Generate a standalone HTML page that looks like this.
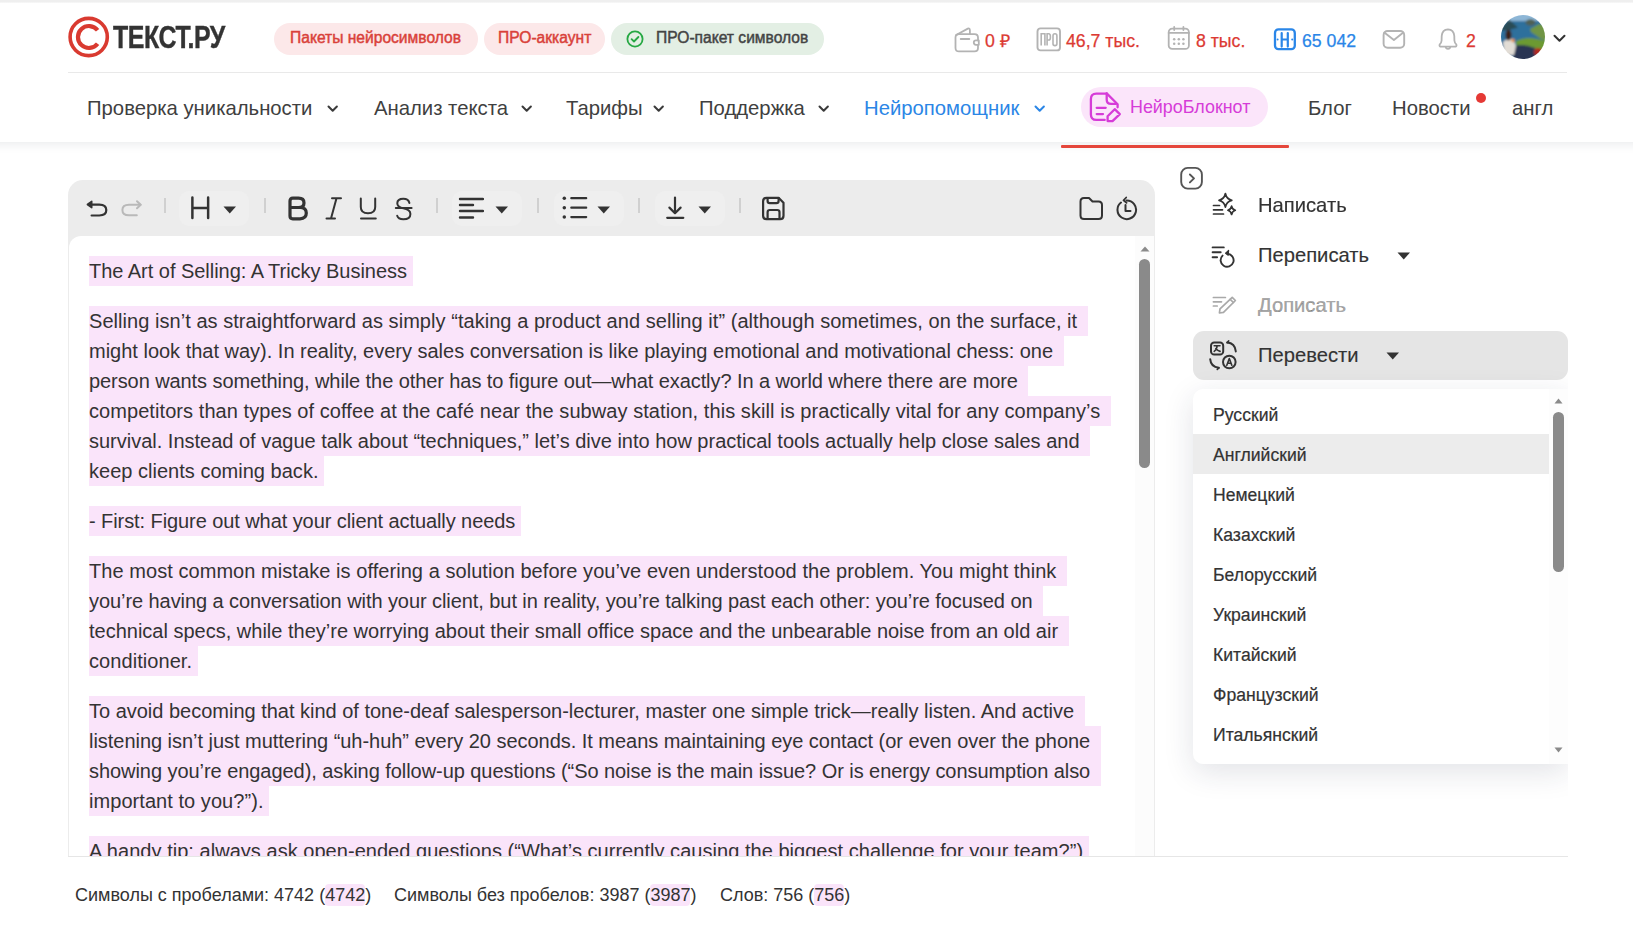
<!DOCTYPE html>
<html><head><meta charset="utf-8">
<style>
*{box-sizing:border-box;margin:0;padding:0}
html,body{width:1633px;height:928px;overflow:hidden;background:#fff;font-family:"Liberation Sans",sans-serif;color:#333}
.abs{position:absolute}
#topstrip{position:absolute;left:0;top:0;width:1633px;height:3px;background:linear-gradient(#efefef,#efefef 60%,#fafafa)}
#header{position:absolute;left:0;top:0;width:1633px;height:142px;background:#fff}
#hshadow{position:absolute;left:-60px;top:0;width:1753px;height:142px;background:#fff;box-shadow:0 3px 9px rgba(40,50,80,.09)}
.pill{position:absolute;top:23px;height:32px;border-radius:16px;font-size:15.6px;font-weight:400;-webkit-text-stroke:0.45px currentColor;line-height:30px;white-space:nowrap}
.pill.red{background:#fce8e9;color:#d9413a}
.pill.green{background:#e3efe4;color:#444}
.stat{position:absolute;top:28.5px;font-size:17.7px;line-height:24px;white-space:nowrap;-webkit-text-stroke:0.25px currentColor}
.nav{position:absolute;top:95px;font-size:20.3px;line-height:26px;color:#404040;white-space:nowrap}
.chev{position:absolute}
#editor{position:absolute;left:68px;top:180px;width:1087px;height:677px;background:#ececec;border-radius:15px 15px 0 0}
#content{position:absolute;left:1px;top:56px;width:1085px;height:620px;background:#fff;border-top-left-radius:12px;overflow:hidden}
.line{position:absolute;left:20px;height:30px;line-height:30px;font-size:20px;color:#333;background:#fae4fa;white-space:pre}
.foot{position:absolute;top:883px;font-size:18px;line-height:24px;color:#333;white-space:pre}
.foot .h{background:#fae4fa;display:inline-block;line-height:22px;border-radius:4px}
.menu{position:absolute;left:1258px;font-size:20.2px;line-height:26px;color:#333;white-space:nowrap;-webkit-text-stroke:0.15px #333}
.dd{position:absolute;left:1213px;font-size:17.6px;-webkit-text-stroke:0.2px #333;line-height:22px;color:#333;white-space:nowrap}
</style></head><body>
<div id="hshadow"></div>
<div id="header">
  <!-- logo -->
  <svg class="abs" style="left:66px;top:14px" width="46" height="46" viewBox="0 0 46 46">
    <circle cx="22.7" cy="23" r="18.6" fill="none" stroke="#d93a30" stroke-width="3.6"/>
    <path d="M31.6 16.2 A11 11 0 1 0 31.6 29.8" fill="none" stroke="#d93a30" stroke-width="4.2"/>
  </svg>
  <div class="abs" id="logotext" style="left:113px;top:19.5px;font-size:30.5px;font-weight:700;color:#333;line-height:34px;transform:scaleX(.817);-webkit-text-stroke:0.4px #333;transform-origin:0 0;letter-spacing:-0.5px">ТЕКСТ.РУ</div>
  <div class="pill red" style="left:274px;width:204px;padding-left:16px">Пакеты нейросимволов</div>
  <div class="pill red" style="left:484px;width:121px;padding-left:14px">ПРО-аккаунт</div>
  <div class="pill green" style="left:611px;width:213px;padding-left:45px">ПРО-пакет символов
    <svg class="abs" style="left:15px;top:7px" width="18" height="18" viewBox="0 0 18 18"><circle cx="9" cy="9" r="7.6" fill="none" stroke="#26a843" stroke-width="1.8"/><path d="M5.6 9.2 L8 11.5 L12.4 7" fill="none" stroke="#26a843" stroke-width="1.8" stroke-linecap="round" stroke-linejoin="round"/></svg>
  </div>
  <div class="abs" style="left:68px;top:72px;width:1499px;height:1px;background:#e9e9e9"></div>

  <!-- stats -->
  <svg class="abs" style="left:954px;top:27px" width="27" height="26" viewBox="0 0 27 26" fill="none" stroke="#b3b3b3" stroke-width="1.8" stroke-linejoin="round" stroke-linecap="round"><path d="M2.2 8 L13.8 1.6 Q15.9 0.9 15.9 3.4 V7.1"/><path d="M5 7.1 H20.5 Q24 7.1 24 10.6 V13.4 M24 17.8 V21 Q24 24.4 20.5 24.4 H5 Q1.5 24.4 1.5 21 V10.6 Q1.5 7.1 5 7.1"/><path d="M22 13.4 H24.8 V17.8 H22 Q19.8 17.8 19.8 15.6 Q19.8 13.4 22 13.4 Z"/><path d="M6.7 12 H15.3"/></svg>
  <div class="stat" style="left:985px;color:#dc3a33">0 ₽</div>
  <svg class="abs" style="left:1036px;top:27px" width="25" height="25" viewBox="0 0 25 25" fill="none" stroke="#b3b3b3" stroke-width="1.9"><rect x="1.5" y="1.4" width="22.5" height="22" rx="3"/><path d="M5.2 18.6 V6.8 H8.9 V18.6 M11.1 18.6 V6.8 H12.8 Q14.4 6.8 14.4 9.5 V10.4 Q14.4 13 12.8 13 H11.1" stroke-width="1.6"/><rect x="17" y="6.8" width="3.9" height="11.8" rx="1.9" stroke-width="1.6"/></svg>
  <div class="stat" style="left:1066px;color:#dc3a33">46,7 тыс.</div>
  <svg class="abs" style="left:1166px;top:26px" width="26" height="27" viewBox="0 0 26 27" fill="none" stroke="#b3b3b3" stroke-width="1.8" stroke-linecap="round"><rect x="2.7" y="2.7" width="20.2" height="20.2" rx="3.5"/><path d="M8.2 1 V4 M17.4 1 V4 M2.7 6.9 H22.9"/><g fill="#b3b3b3" stroke="none"><circle cx="8.2" cy="13.3" r="1.25"/><circle cx="12.8" cy="13.3" r="1.25"/><circle cx="17.4" cy="13.3" r="1.25"/><circle cx="8.2" cy="17.7" r="1.25"/><circle cx="12.8" cy="17.7" r="1.25"/><circle cx="17.4" cy="17.7" r="1.25"/></g></svg>
  <div class="stat" style="left:1196px;color:#dc3a33">8 тыс.</div>
  <svg class="abs" style="left:1272px;top:27px" width="26" height="25" viewBox="0 0 26 25" fill="none" stroke="#2a86e8" stroke-width="2.3" stroke-linecap="round"><rect x="3" y="2.4" width="19.8" height="19.8" rx="3.5"/><path d="M9.7 6 V19.6 M15.8 6 V19.6 M9.7 12.5 H15.8" stroke-width="2.2"/><g fill="#2a86e8" stroke="none"><circle cx="5.6" cy="12.5" r="1"/><circle cx="20.2" cy="12.5" r="1"/></g></svg>
  <div class="stat" style="left:1302px;color:#2a86e8">65 042</div>
  <svg class="abs" style="left:1381px;top:28px" width="27" height="22" viewBox="0 0 27 22" fill="none" stroke="#b3b3b3" stroke-width="1.9" stroke-linejoin="round" stroke-linecap="round"><rect x="2.6" y="3" width="20.6" height="16.7" rx="4"/><path d="M3.3 4.5 L12.9 11.9 L22.3 4.5"/></svg>
  <svg class="abs" style="left:1436px;top:27px" width="23" height="25" viewBox="0 0 23 25" fill="none" stroke="#b3b3b3" stroke-width="1.8" stroke-linejoin="round" stroke-linecap="round"><path d="M12 2.3 Q17.8 2.6 18.3 9 L18.4 13.5 Q18.6 16 20.3 17.4 Q21.2 19.7 18.5 19.7 H5.5 Q2.8 19.7 3.7 17.4 Q5.4 16 5.6 13.5 L5.7 9 Q6.2 2.6 12 2.3 Z"/><path d="M9.8 20.6 Q12 23.2 14.2 20.6"/></svg>
  <div class="stat" style="left:1466px;color:#dc3a33">2</div>
  <svg class="abs" id="avatar" style="left:1501px;top:15px" width="44" height="44" viewBox="0 0 44 44">
    <defs><clipPath id="avc"><circle cx="22" cy="22" r="22"/></clipPath><filter id="avb" x="-20%" y="-20%" width="140%" height="140%"><feGaussianBlur stdDeviation="0.9"/></filter></defs>
    <g clip-path="url(#avc)"><g filter="url(#avb)">
      <rect x="-4" y="-4" width="52" height="52" fill="#2f6f9c"/>
      <rect x="-4" y="-4" width="52" height="10" fill="#8db6d6"/>
      <path d="M-2 16 L8 4.5 L17 12.5 L8 15 Z" fill="#2b4b55"/>
      <ellipse cx="29.5" cy="7.5" rx="5" ry="3.2" fill="#4f6155"/>
      <path d="M29 14 L38 9 L46 10 L46 26 L40 24 L30 17 Z" fill="#6f9545"/>
      <path d="M15 26 Q25 21 36 24 L46 26 L46 40 L35 38 L15 34 Z" fill="#6c9a30"/>
      <path d="M12 31 Q22 28 34 33 L36 48 L12 48 Z" fill="#2a3652"/>
      <path d="M2 27 Q7 22 12 24 L15 31 L13 40 L3 40 Z" fill="#e2ddd6"/>
      <ellipse cx="7.5" cy="20" rx="3" ry="5.5" fill="#3a2418"/>
      <circle cx="12" cy="25.5" r="1.8" fill="#e8903f"/>
      <circle cx="37" cy="37" r="4" fill="#b02a20"/>
      <path d="M-2 36 L8 40 L12 48 L-2 48 Z" fill="#3b3a36"/>
    </g></g>
  </svg>
  <svg class="abs" style="left:1553px;top:34px" width="13" height="9" viewBox="0 0 13 9" fill="none" stroke="#333" stroke-width="2" stroke-linecap="round" stroke-linejoin="round"><path d="M1.5 1.8 L6.5 6.8 L11.5 1.8"/></svg>

  <!-- nav -->
  <div class="nav" style="left:87px">Проверка уникальности</div>
  <svg class="chev" style="left:326.8px;top:104px" width="12" height="9" viewBox="0 0 12 9" fill="none" stroke="#3a3a3a" stroke-width="2" stroke-linecap="round" stroke-linejoin="round"><path d="M1.5 2.5 L5.7 6.7 L9.9 2.5"/></svg>
  <div class="nav" style="left:374px">Анализ текста</div>
  <svg class="chev" style="left:520.6px;top:104px" width="12" height="9" viewBox="0 0 12 9" fill="none" stroke="#3a3a3a" stroke-width="2" stroke-linecap="round" stroke-linejoin="round"><path d="M1.5 2.5 L5.7 6.7 L9.9 2.5"/></svg>
  <div class="nav" style="left:566px">Тарифы</div>
  <svg class="chev" style="left:652.8px;top:104px" width="12" height="9" viewBox="0 0 12 9" fill="none" stroke="#3a3a3a" stroke-width="2" stroke-linecap="round" stroke-linejoin="round"><path d="M1.5 2.5 L5.7 6.7 L9.9 2.5"/></svg>
  <div class="nav" style="left:699px">Поддержка</div>
  <svg class="chev" style="left:818.0px;top:104px" width="12" height="9" viewBox="0 0 12 9" fill="none" stroke="#3a3a3a" stroke-width="2" stroke-linecap="round" stroke-linejoin="round"><path d="M1.5 2.5 L5.7 6.7 L9.9 2.5"/></svg>
  <div class="nav" style="left:864px;color:#2b86e6">Нейропомощник</div>
  <svg class="chev" style="left:1034.1px;top:104px" width="12" height="9" viewBox="0 0 12 9" fill="none" stroke="#2b86e6" stroke-width="2" stroke-linecap="round" stroke-linejoin="round"><path d="M1.5 2.5 L5.7 6.7 L9.9 2.5"/></svg>
  <div class="abs" style="left:1081px;top:87px;width:187px;height:40px;border-radius:20px;background:#fbe5fa"></div>
  <svg class="abs" style="left:1087px;top:90px" width="36" height="35" viewBox="0 0 36 35" fill="none" stroke="#d63cd8" stroke-width="2.3" stroke-linejoin="round" stroke-linecap="round"><path d="M19.7 3.7 H9.3 Q3.9 3.7 3.9 9.1 V24.5 Q3.9 29.9 9.3 29.9 H17.7"/><path d="M19.7 3.7 V9.5 Q19.7 13.9 24.1 13.9 H29"/><path d="M19.7 3.4 L30.6 14.3 V17.3"/><path d="M9.7 17.8 H18.7 M9.7 24.1 H16"/><path d="M27.7 19.2 L32.8 24.1 L25.5 31.1 H20.6 V26.3 Z"/></svg>
  <div class="nav" style="left:1130px;top:94px;font-size:17.9px;color:#d63cd8">НейроБлокнот</div>
  <div class="nav" style="left:1308px">Блог</div>
  <div class="nav" style="left:1392px">Новости</div>
  <div class="abs" style="left:1476px;top:93px;width:10px;height:10px;border-radius:50%;background:#e53935"></div>
  <div class="nav" style="left:1512px">англ</div>
</div>
<div class="abs" style="left:1061px;top:145px;width:228px;height:3px;background:#e5473c;border-radius:1px"></div>
<div id="topstrip"></div>
<div id="editor">
  <!-- toolbar (coords relative to editor: page x-68, y-180) -->
  <svg class="abs" style="left:16.5px;top:19px" width="24" height="20" viewBox="0 0 24 20" fill="none" stroke="#333" stroke-width="2.2" stroke-linecap="round" stroke-linejoin="round"><path d="M6.2 5.7 H14.3 Q21.3 5.7 21.3 11.1 Q21.3 16.5 14.3 16.5 H6.6"/><path d="M2.4 5.5 L6.7 2.3 L6.7 8.7 Z" fill="#333" stroke-width="1.6"/></svg>
  <svg class="abs" style="left:52px;top:19px" width="24" height="20" viewBox="0 0 24 20" fill="none" stroke="#b9b9b9" stroke-width="2" stroke-linecap="round" stroke-linejoin="round"><path d="M20.5 5.7 H9 Q2.4 5.7 2.4 11 Q2.4 16.3 9 16.3 H16.8"/><path d="M17 2.2 L20.7 5.7 L17 9.2"/></svg>
  <div class="abs" style="left:96px;top:18px;width:1.5px;height:15px;background:#d0d0d0"></div>
  <div class="abs" style="left:111px;top:11px;width:70px;height:35px;border-radius:10px;background:#efefef"></div>
  <svg class="abs" style="left:122px;top:15.8px" width="21" height="24" viewBox="0 0 22 25" fill="none" stroke="#333" stroke-linecap="round" stroke-linejoin="round" stroke-width="2.6"><path d="M2.5 1.5 V23 M19 1.5 V23 M2.5 12.5 H19"/></svg>
  <svg class="abs" style="left:155px;top:25.5px" width="14" height="8" viewBox="0 0 14 8"><path d="M0.5 0.5 H13 L6.75 7.5 Z" fill="#333"/></svg>
  <div class="abs" style="left:196px;top:18px;width:1.5px;height:15px;background:#d0d0d0"></div>
  <svg class="abs" style="left:219px;top:16px" width="22" height="26" viewBox="0 0 22 26" fill="none" stroke="#333" stroke-linecap="round" stroke-linejoin="round" stroke-width="3.2"><path d="M5.8 2.2 H11.5 Q17 2.2 17 6.9 Q17 11.5 11.5 11.5 H3 V5 Q3 2.2 5.8 2.2 Z M3 11.5 H13 Q19.3 11.5 19.3 17.1 Q19.3 22.8 13 22.8 H5.8 Q3 22.8 3 20 Z"/></svg>
  <svg class="abs" style="left:256px;top:16px" width="20" height="25" viewBox="0 0 20 25" fill="none" stroke="#333" stroke-linecap="round" stroke-linejoin="round" stroke-width="2"><path d="M8 2.3 H17 M2.5 22.5 H11 M12.5 2.3 L7 22.5"/></svg>
  <svg class="abs" style="left:290px;top:17px" width="20" height="25" viewBox="0 0 20 25" fill="none" stroke="#333" stroke-linecap="round" stroke-linejoin="round" stroke-width="2"><path d="M2.8 1.5 V10 Q2.8 16.3 10 16.3 Q17.2 16.3 17.2 10 V1.5 M3 21.5 H17.8"/></svg>
  <svg class="abs" style="left:325px;top:17px" width="20" height="24" viewBox="0 0 20 24" fill="none" stroke="#333" stroke-linecap="round" stroke-linejoin="round" stroke-width="2"><path d="M16.4 6 Q15.5 1.8 10.3 1.8 Q4.3 1.8 4.3 6.3 Q4.3 10.3 10.3 11.3 Q17.4 12.6 17.4 17 Q17.4 22.3 10.3 22.3 Q5.2 22.3 4.2 18.8 M2.8 10.9 H18.6"/></svg>
  <div class="abs" style="left:368px;top:18px;width:1.5px;height:15px;background:#d0d0d0"></div>
  <div class="abs" style="left:384px;top:11px;width:70px;height:35px;border-radius:10px;background:#efefef"></div>
  <svg class="abs" style="left:390px;top:16.5px" width="26" height="22" viewBox="0 0 26 22" fill="none" stroke="#333" stroke-linecap="round" stroke-linejoin="round" stroke-width="2.4"><path d="M2 2 H25 M2 8 H15 M2 14 H25 M2 20.5 H15"/></svg>
  <svg class="abs" style="left:427px;top:25.5px" width="14" height="8" viewBox="0 0 14 8"><path d="M0.5 0.5 H13 L6.75 7.5 Z" fill="#333"/></svg>
  <div class="abs" style="left:469px;top:18px;width:1.5px;height:15px;background:#d0d0d0"></div>
  <div class="abs" style="left:486px;top:11px;width:70px;height:35px;border-radius:10px;background:#efefef"></div>
  <svg class="abs" style="left:493px;top:16px" width="27" height="24" viewBox="0 0 27 24" fill="none" stroke="#333" stroke-width="2.2" stroke-linecap="round"><circle cx="3.3" cy="2.2" r="1.75" fill="#333" stroke="none"/><circle cx="3.3" cy="11.7" r="1.75" fill="#333" stroke="none"/><circle cx="3.3" cy="21.1" r="1.75" fill="#333" stroke="none"/><path d="M10.3 2.2 H25.2 M10.3 11.7 H25.2 M10.3 21.1 H25.2"/></svg>
  <svg class="abs" style="left:529px;top:25.5px" width="14" height="8" viewBox="0 0 14 8"><path d="M0.5 0.5 H13 L6.75 7.5 Z" fill="#333"/></svg>
  <div class="abs" style="left:570px;top:18px;width:1.5px;height:15px;background:#d0d0d0"></div>
  <div class="abs" style="left:587px;top:11px;width:70px;height:35px;border-radius:10px;background:#efefef"></div>
  <svg class="abs" style="left:665px;top:196px;position:fixed" width="22" height="25" viewBox="0 0 22 25" fill="none" stroke="#333" stroke-linecap="round" stroke-linejoin="round" stroke-width="2.2"><path d="M10 1.5 V16.6 M4.4 11.6 L10 17.2 L15.6 11.6 M2.2 21.8 H18.3"/></svg>
  <svg class="abs" style="left:630px;top:25.5px" width="14" height="8" viewBox="0 0 14 8"><path d="M0.5 0.5 H13 L6.75 7.5 Z" fill="#333"/></svg>
  <div class="abs" style="left:671px;top:18px;width:1.5px;height:15px;background:#d0d0d0"></div>
  <svg class="abs" style="left:761px;top:196px;position:fixed" width="25" height="25" viewBox="0 0 25 25" fill="none" stroke="#333" stroke-linecap="round" stroke-linejoin="round" stroke-width="2.2"><path d="M5.5 1.8 H17.6 L22.5 6.7 V19.7 Q22.5 23.1 19.1 23.1 H5.5 Q2.1 23.1 2.1 19.7 V5.2 Q2.1 1.8 5.5 1.8 Z"/><path d="M6.6 2 V4.9 Q6.6 7.1 8.8 7.1 H15.4 Q17.6 7.1 17.6 4.9 V2"/><path d="M6.6 22.9 V16.2 Q6.6 14 8.8 14 H16.3 Q18.5 14 18.5 16.2 V22.9"/></svg>
  <svg class="abs" style="left:1011px;top:16px" width="25" height="25" viewBox="0 0 25 25" fill="none" stroke="#333" stroke-linecap="round" stroke-linejoin="round" stroke-width="2"><path d="M5 2 H10 L13.5 5.5 H19.5 Q23 5.5 23 9 V19.5 Q23 23 19.5 23 H5 Q1.5 23 1.5 19.5 V5.5 Q1.5 2 5 2 Z"/></svg>
  <svg class="abs" style="left:1047px;top:16px" width="23" height="25" viewBox="0 0 23 25" fill="none" stroke="#333" stroke-linecap="round" stroke-linejoin="round" stroke-width="2"><path d="M6 6.5 A9.3 9.3 0 1 0 11.5 4.5"/><path d="M11.2 1.5 L8.5 4.3 L11.5 6.8" stroke-width="1.8"/><path d="M10.5 9 V15 H15.5"/></svg>
  <div id="content">
    <div class="line e" style="top:20px;width:323.5px;letter-spacing:-0.0283px">The Art of Selling: A Tricky Business</div>
    <div class="line" style="top:70px;width:998.7px;letter-spacing:0.0475px">Selling isn’t as straightforward as simply “taking a product and selling it” (although sometimes, on the surface, it</div>
    <div class="line" style="top:100px;width:974.6px;letter-spacing:-0.0041px">might look that way). In reality, every sales conversation is like playing emotional and motivational chess: one</div>
    <div class="line" style="top:130px;width:939.4px;letter-spacing:-0.0803px">person wants something, while the other has to figure out—what exactly? In a world where there are more</div>
    <div class="line" style="top:160px;width:1021.8px;letter-spacing:0.0690px">competitors than types of coffee at the café near the subway station, this skill is practically vital for any company’s</div>
    <div class="line" style="top:190px;width:1001.0px;letter-spacing:-0.0069px">survival. Instead of vague talk about “techniques,” let’s dive into how practical tools actually help close sales and</div>
    <div class="line e" style="top:220px;width:235.0px;letter-spacing:0.0194px">keep clients coming back.</div>
    <div class="line e" style="top:270px;width:431.7px;letter-spacing:-0.0782px">- First: Figure out what your client actually needs</div>
    <div class="line" style="top:320px;width:977.9px;letter-spacing:0.0583px">The most common mistake is offering a solution before you’ve even understood the problem. You might think</div>
    <div class="line" style="top:350px;width:954.0px;letter-spacing:-0.0695px">you’re having a conversation with your client, but in reality, you’re talking past each other: you’re focused on</div>
    <div class="line" style="top:380px;width:979.6px;letter-spacing:0.0003px">technical specs, while they’re worrying about their small office space and the unbearable noise from an old air</div>
    <div class="line e" style="top:410px;width:108.6px;letter-spacing:0.0669px">conditioner.</div>
    <div class="line" style="top:460px;width:995.5px;letter-spacing:-0.0093px">To avoid becoming that kind of tone-deaf salesperson-lecturer, master one simple trick—really listen. And active</div>
    <div class="line" style="top:490px;width:1011.7px;letter-spacing:-0.0333px">listening isn’t just muttering “uh-huh” every 20 seconds. It means maintaining eye contact (or even over the phone</div>
    <div class="line" style="top:520px;width:1011.7px;letter-spacing:-0.0542px">showing you’re engaged), asking follow-up questions (“So noise is the main issue? Or is energy consumption also</div>
    <div class="line e" style="top:550px;width:180.0px;letter-spacing:0.0539px">important to you?”).</div>
    <div class="line e" style="top:600px;width:999.6px;letter-spacing:0.0356px">A handy tip: always ask open-ended questions (“What’s currently causing the biggest challenge for your team?”)</div>
    <div class="abs" style="right:0;top:0;width:19px;height:620px;background:#fcfcfc"></div>
    <svg class="abs" style="left:1071px;top:10px" width="10" height="6" viewBox="0 0 10 6"><path d="M0.5 5.5 L5 0.5 L9.5 5.5 Z" fill="#8a8a8a"/></svg>
    <div class="abs" style="left:1070px;top:23px;width:11px;height:209px;border-radius:6px;background:#8a8a8a"></div>
</div>
</div>

<!-- right panel -->
<svg class="abs" style="left:1179px;top:166px" width="25" height="25" viewBox="0 0 25 25" fill="none" stroke="#555" stroke-width="1.9" stroke-linecap="round" stroke-linejoin="round"><rect x="2.2" y="1.9" width="20.7" height="20.7" rx="6.5"/><path d="M10.9 8.5 L15 12.4 L10.9 16.4"/></svg>
<svg class="abs" style="left:1211px;top:191px" width="27" height="26" viewBox="0 0 27 26" fill="none" stroke="#333" stroke-width="1.7" stroke-linecap="round" stroke-linejoin="round"><path d="M2.5 14.5 H8.5 M2.5 18.8 H11.5 M2.5 23 H12.5"/><path d="M14.4 2.500000000000001 Q15.55 8.08 20.8 9.3 Q15.55 10.52 14.4 16.1 Q13.25 10.52 8.0 9.3 Q13.25 8.08 14.4 2.500000000000001 Z"/><path d="M20.6 15.100000000000001 Q21.27 18.54 24.3 19.3 Q21.27 20.06 20.6 23.5 Q19.93 20.06 16.900000000000002 19.3 Q19.93 18.54 20.6 15.100000000000001 Z"/></svg>
<div class="menu" style="top:192px">Написать</div>
<svg class="abs" style="left:1210px;top:244px" width="28" height="25" viewBox="0 0 28 25" fill="none" stroke="#333" stroke-width="1.9" stroke-linecap="round" stroke-linejoin="round"><path d="M2.6 3.4 H13.8 M2.6 8.3 H10.7 M2.6 13.3 H7.1"/><path d="M17.6 9.8 A6.5 6.5 0 1 1 12.58 11.62"/><path d="M15.6 9.2 L18.6 6.4 L18.2 11.2 Z" fill="#333" stroke-width="1.2"/></svg>
<div class="menu" style="top:242px">Переписать</div>
<svg class="abs" style="left:1397px;top:252px" width="14" height="8" viewBox="0 0 14 8"><path d="M0.5 0.5 H13 L6.75 7.5 Z" fill="#333"/></svg>
<svg class="abs" style="left:1211px;top:294px" width="27" height="23" viewBox="0 0 27 23" fill="none" stroke="#a9a9a9" stroke-width="1.7" stroke-linecap="round" stroke-linejoin="round"><path d="M2.4 3.5 H14.4 M2.4 7.8 H10.5 M2.4 12 H6.2"/><path d="M21.2 3.3 L24.4 6.5 L12.5 18.4 L8.4 19 L9 14.9 Z"/><path d="M19.2 5.3 L22.4 8.5"/></svg>
<div class="menu" style="top:292px;color:#a9a9a9">Дописать</div>
<div class="abs" style="left:1193px;top:331px;width:375px;height:49px;border-radius:11px;background:#e5e5e5"></div>
<svg class="abs" style="left:1208px;top:340px" width="31" height="31" viewBox="0 0 31 31" fill="none" stroke="#333" stroke-width="2" stroke-linecap="round" stroke-linejoin="round"><rect x="3" y="2.5" width="12.2" height="12.1" rx="3.2"/><path d="M6.2 5.8 H12 M9.1 5.8 Q8.9 9.5 6.2 11.3 M7.8 8.6 Q9.8 10.9 12.1 11.4" stroke-width="1.6"/><circle cx="21.3" cy="22" r="6.3"/><path d="M18.8 25.2 L21.3 18.6 L23.8 25.2 M19.7 23.3 H22.9" stroke-width="1.6"/><path d="M19.2 2.6 Q27 3.2 27.8 11.4"/><path d="M19.2 2.6 L20.6 1" stroke-width="1.7"/><path d="M2.2 19.2 Q2.8 27 10.8 27.8"/><path d="M10.8 27.8 L9.3 29.3" stroke-width="1.7"/></svg>
<div class="menu" style="top:342px">Перевести</div>
<svg class="abs" style="left:1386px;top:352px" width="14" height="8" viewBox="0 0 14 8"><path d="M0.5 0.5 H13 L6.75 7.5 Z" fill="#333"/></svg>

<!-- dropdown -->
<div class="abs" style="left:1100px;top:370px;width:468px;height:486px;overflow:hidden"><div class="abs" style="left:93px;top:19px;width:375px;height:375px;background:#fff;border-radius:10px 0 0 10px;box-shadow:0 8px 30px rgba(30,40,70,.13);overflow:hidden">
  <div class="abs" style="left:0;top:45px;width:356px;height:40px;background:#ececec"></div>
  <div class="abs" style="left:356px;top:0;width:19px;height:375px;background:#fdfdfd"></div>
  <svg class="abs" style="left:361px;top:9px" width="9" height="6" viewBox="0 0 9 6"><path d="M0.5 5.5 L4.5 0.5 L8.5 5.5 Z" fill="#8a8a8a"/></svg>
  <div class="abs" style="left:360px;top:23px;width:11px;height:160px;border-radius:6px;background:#8a8a8a"></div>
  <svg class="abs" style="left:361px;top:358px" width="9" height="6" viewBox="0 0 9 6"><path d="M0.5 0.5 L4.5 5.5 L8.5 0.5 Z" fill="#8a8a8a"/></svg>
</div></div>
<div class="dd" style="top:403.5px">Русский</div>
<div class="dd" style="top:443.5px">Английский</div>
<div class="dd" style="top:483.5px">Немецкий</div>
<div class="dd" style="top:523.5px">Казахский</div>
<div class="dd" style="top:563.5px">Белорусский</div>
<div class="dd" style="top:603.5px">Украинский</div>
<div class="dd" style="top:643.5px">Китайский</div>
<div class="dd" style="top:683.5px">Французский</div>
<div class="dd" style="top:723.5px">Итальянский</div>

<div class="abs" style="left:68px;top:856px;width:1500px;height:1px;background:#e6e6e6"></div>
<!-- footer -->
<div class="foot" style="left:75px">Символы с пробелами: 4742 (<span class="h">4742</span>)</div>
<div class="foot" style="left:394px">Символы без пробелов: 3987 (<span class="h">3987</span>)</div>
<div class="foot" style="left:720px">Слов: 756 (<span class="h">756</span>)</div>
</body></html>
